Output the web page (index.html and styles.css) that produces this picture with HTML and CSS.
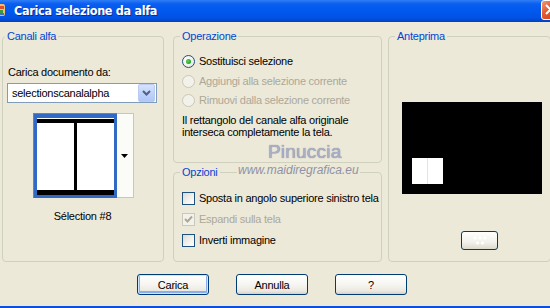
FILE: index.html
```html
<!DOCTYPE html>
<html>
<head>
<meta charset="utf-8">
<link rel="stylesheet" href="styles.css">
</head>
<body>
<div class="window">
  <div class="titlebar">
    <svg class="app-icon" width="6" height="16" viewBox="0 0 6 16"><rect x="-6" y="2" width="11" height="12" rx="2" fill="#f0c070"/><rect x="-4" y="4" width="8" height="3" fill="#e05030"/><rect x="-3" y="8" width="6" height="3" fill="#3a9a40"/><rect x="0" y="11" width="4" height="2" fill="#4070d0"/></svg>
    <span class="title">Carica selezione da alfa</span>
    <span class="close"><svg width="21" height="19" viewBox="0 0 21 19"><path d="M6 5 L15 14 M15 5 L6 14" stroke="#fff" stroke-width="2"/></svg></span>
  </div>
  <div class="client">
    <div class="main">
      <div class="group g-canali">
        <div class="legend">Canali alfa</div>
        <div class="canali-body">
          <div class="lbl">Carica documento da:</div>
          <div class="select">
            <span class="select-text">selectionscanalalpha</span>
            <span class="dd-btn"><svg width="9" height="6" viewBox="0 0 9 6"><path d="M1 1 L4.5 4.5 L8 1" fill="none" stroke="#4d6185" stroke-width="2"/></svg></span>
          </div>
          <div class="thumb-wrap">
            <div class="thumb">
              <div class="thumb-img">
                <div class="thumb-col"></div>
                <div class="thumb-col"></div>
              </div>
            </div>
            <div class="thumb-dd"><svg width="7" height="4" viewBox="0 0 7 4"><path d="M0 0 H7 L3.5 4 Z" fill="#000"/></svg></div>
          </div>
          <div class="thumb-name">Sélection #8</div>
        </div>
      </div>
      <div class="middle">
        <div class="group g-oper">
          <div class="legend">Operazione</div>
          <div class="opt-row r1"><span class="radio checked"></span><span>Sostituisci selezione</span></div>
          <div class="opt-row r2 disabled"><span class="radio"></span><span>Aggiungi alla selezione corrente</span></div>
          <div class="opt-row r3 disabled"><span class="radio"></span><span>Rimuovi dalla selezione corrente</span></div>
          <div class="desc">Il rettangolo del canale alfa originale<br>interseca completamente la tela.</div>
        </div>
        <div class="group g-opz">
          <div class="legend">Opzioni</div>
          <div class="opt-row c1"><span class="check"></span><span>Sposta in angolo superiore sinistro tela</span></div>
          <div class="opt-row c2 disabled"><span class="check checked"><svg width="9" height="9" viewBox="0 0 9 9"><path d="M1 4 L3.5 6.5 L8 1.5" fill="none" stroke="#aca899" stroke-width="2"/></svg></span><span>Espandi sulla tela</span></div>
          <div class="opt-row c3"><span class="check"></span><span>Inverti immagine</span></div>
        </div>
        <div class="wm-name">Pinuccia</div>
        <div class="wm-url">www.maidiregrafica.eu</div>
      </div>
      <div class="group g-ante">
        <div class="legend">Anteprima</div>
        <div class="preview"><div class="preview-sel"></div></div>
        <div class="small-btn"><svg width="20" height="12" viewBox="0 0 20 12"><g fill="#fff"><circle cx="5" cy="3" r="1.6"/><circle cx="10" cy="3" r="1.6"/><circle cx="15" cy="3" r="1.6"/><circle cx="7.5" cy="8" r="1.6"/><circle cx="12.5" cy="8" r="1.6"/></g></svg></div>
      </div>
    </div>
    <div class="buttons">
      <div class="btn default">Carica</div>
      <div class="btn">Annulla</div>
      <div class="btn">?</div>
    </div>
  </div>
  <div class="bottom-edge"></div>
</div>
</body>
</html>
```
FILE: styles.css
```css
* { box-sizing: border-box; }
body {
  margin: 0;
  width: 550px;
  height: 308px;
  overflow: hidden;
  background: #ece9d8;
  font-family: "Liberation Sans", Arial, sans-serif;
  font-size: 11px;
  letter-spacing: -0.25px;
  color: #000;
}
.window { width: 550px; height: 308px; display: flex; flex-direction: column; }
.titlebar {
  height: 22px;
  flex: none;
  display: flex;
  align-items: center;
  overflow: hidden;
  background: linear-gradient(to bottom, #2f7ef6 0%, #0a5ef0 18%, #0058ee 50%, #0053e4 80%, #0041c4 100%);
}
.app-icon { flex: none; margin-top: -2px; }
.title {
  margin-left: 8px;
  margin-top: -2px;
  color: #fff;
  font-family: "DejaVu Sans Condensed", "DejaVu Sans", sans-serif;
  font-stretch: condensed;
  font-weight: bold;
  font-size: 12.5px;
  letter-spacing: -0.3px;
  text-shadow: 1px 1px 0 #0a2a9a;
  flex: 1;
}
.close {
  flex: none;
  width: 21px;
  height: 20px;
  margin-right: -12px;
  margin-top: -3px;
  border: 1px solid #fff;
  border-radius: 3px;
  background: linear-gradient(135deg, #f19a7c 0%, #e2582f 40%, #c9421d 100%);
  display: flex;
  align-items: center;
}
.close svg { margin-left: -2px; }
.client { flex: 1; padding: 14px 0 0 2px; display: flex; flex-direction: column; }
.main {
  display: grid;
  grid-template-columns: 162px 209px 160px;
  column-gap: 9px;
  height: 226px;
}
.main > .g-ante { margin-left: -3px; }
.group {
  border: 1px solid #d0d0bf;
  border-radius: 4px;
  display: flex;
  flex-direction: column;
}
.legend {
  margin-top: -7px;
  line-height: 13px;
  height: 13px;
  color: #0046d5;
  background: #ece9d8;
  padding: 0 2px;
  align-self: flex-start;
}
.g-canali .legend { margin-left: 2px; }
.g-oper .legend, .g-opz .legend, .g-ante .legend { margin-left: 6px; }

/* Canali alfa */
.canali-body { display: flex; flex-direction: column; padding: 0 6px 0 4px; }
.lbl { margin-top: 23px; line-height: 13px; margin-left: 1px; }
.select {
  margin-top: 4px;
  height: 20px;
  border: 1px solid #7f9db9;
  background: #fff;
  display: flex;
  align-items: center;
  padding: 0 1px 0 4px;
}
.select-text { flex: 1; }
.dd-btn {
  width: 17px;
  height: 18px;
  border: 1px solid #b9cbf3;
  border-radius: 2px;
  background: linear-gradient(to bottom, #d8e3fb 0%, #c1d3fb 50%, #b0c6f6 100%);
  display: flex;
  align-items: center;
  justify-content: center;
}
.thumb-wrap {
  margin-top: 10px;
  align-self: center;
  display: flex;
  height: 85px;
  margin-left: 2px;
}
.thumb {
  width: 84px;
  border-top: 1px solid #808080;
  border-left: 1px solid #808080;
  background: #fff;
}
.thumb-img {
  height: 100%;
  border: 3px solid #316ac5;
  border-top-width: 4px;
  display: flex;
  background: #000;
  padding: 5px 0 5px 0;
  gap: 3px;
  box-shadow: inset 0 1px 0 #fff;
}
.thumb-col { flex: 1; background: #fff; }
.thumb-dd {
  width: 17px;
  border: 1px solid #c9c7ba;
  border-left: none;
  background: #fbfbf8;
  display: flex;
  align-items: center;
  justify-content: center;
}
.thumb-name { margin-top: 12px; line-height: 13px; text-align: center; margin-left: 1px; }

/* Options */
.opt-row {
  display: flex;
  align-items: center;
  gap: 4px;
  height: 13px;
  line-height: 13px;
  margin-left: 8px;
  white-space: nowrap;
}
.disabled { color: #aca899; }
.r1 { margin-top: 12px; }
.r2 { margin-top: 7px; }
.r3 { margin-top: 6px; }
.radio {
  width: 13px;
  height: 13px;
  flex: none;
  border-radius: 50%;
  border: 1px solid #1c5180;
  background: radial-gradient(circle at 35% 35%, #fff 0%, #f0efe9 60%, #dcdad0 100%);
  display: flex;
  align-items: center;
  justify-content: center;
}
.radio.checked::after {
  content: "";
  width: 5px;
  height: 5px;
  border-radius: 50%;
  background: radial-gradient(circle at 40% 40%, #5fd35f 0%, #21a121 70%);
}
.disabled .radio { border-color: #cac8bb; background: #f3f2ea; }
.desc { margin-top: 7px; margin-left: 8px; line-height: 12px; }
.middle { position: relative; display: flex; flex-direction: column; }
.g-oper { height: 127px; }
.g-opz { margin-top: 9px; flex: 1; }
.c1 { margin-top: 13px; }
.c2 { margin-top: 8px; }
.c3 { margin-top: 8px; }
.check {
  width: 13px;
  height: 13px;
  flex: none;
  border: 1px solid #1c5180;
  background: linear-gradient(135deg, #dcdad2 0%, #f4f3ee 60%, #fff 100%);
  display: flex;
  align-items: center;
  justify-content: center;
}
.disabled .check { border-color: #cac8bb; background: #f3f2ea; }

/* Watermark */
.wm-name {
  position: absolute;
  left: 95px;
  top: 106px;
  font-size: 19px;
  line-height: 19px;
  color: #abafc6;
  text-shadow: 0 0 1px #6f7390;
  letter-spacing: 0.2px;
}
.wm-url {
  position: absolute;
  left: 64px;
  top: 128px;
  font-size: 12px;
  line-height: 12px;
  font-style: italic;
  color: #8f92a6;
  background: #ece9d8;
  padding: 0 1px;
  letter-spacing: 0;
}

/* Anteprima */
.preview {
  margin-top: 59px;
  margin-left: 13px;
  width: 140px;
  height: 92px;
  background: #000;
  padding: 56px 0 0 10px;
}
.preview-sel {
  width: 31px;
  height: 26px;
  background: linear-gradient(to right, #fff 0 15px, #e4e4e4 15px 16px, #fff 16px);
}
.small-btn {
  margin-top: 37px;
  margin-left: 72px;
  width: 37px;
  height: 19px;
  border: 1px solid #003c74;
  border-radius: 3px;
  background: linear-gradient(to bottom, #fff 0%, #f2f1ec 60%, #dcd8cc 100%);
  display: flex;
  align-items: center;
  justify-content: center;
}

/* Buttons */
.buttons { display: flex; gap: 27px; margin-top: 12px; padding-left: 135px; }
.btn {
  width: 72px;
  height: 21px;
  border: 1px solid #003c74;
  border-radius: 3px;
  background: linear-gradient(to bottom, #fff 0%, #f6f5f1 50%, #eae8e0 85%, #d6d0c5 100%);
  display: flex;
  align-items: center;
  justify-content: center;
}
.btn.default {
  box-shadow: inset 0 0 0 1px #cee7ff, inset 0 -1px 0 2px #89adf0;
}
.bottom-edge { height: 2px; background: #0a4fe0; flex: none; }
```
